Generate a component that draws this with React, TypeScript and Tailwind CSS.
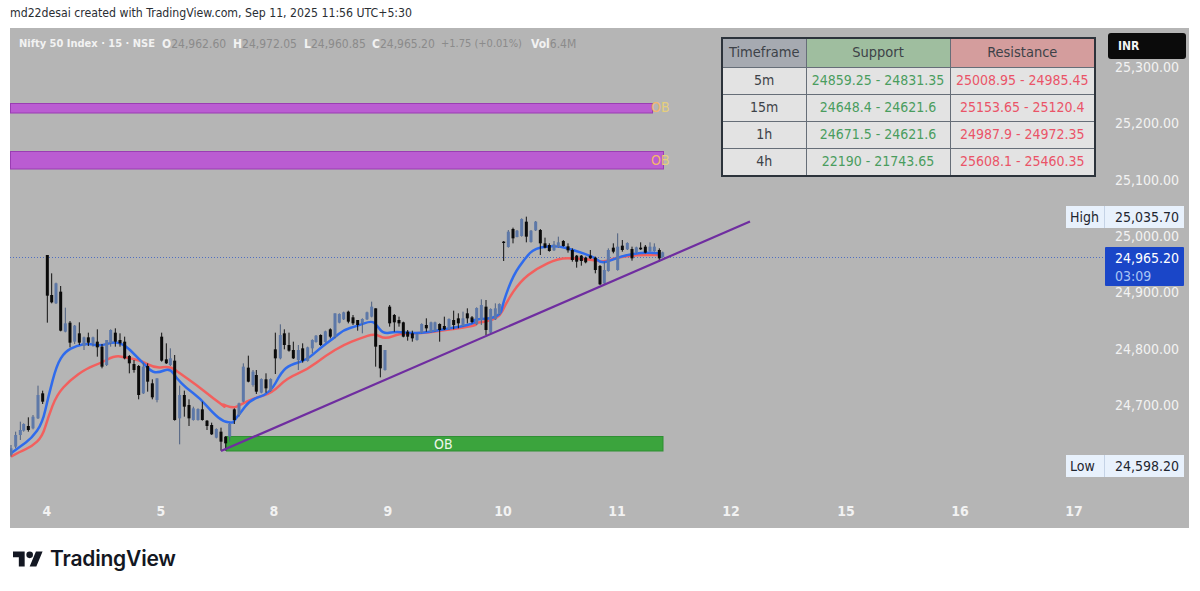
const uiFont = "font-['DejaVu_Sans_Condensed','Noto_Sans',sans-serif]";

type Bar = [number, number, number, number, number, number];

// rows are x, wick top, body top, body bottom, wick bottom, up(1)/down(0)
const toPage = (ox: number, oy: number, rows: Bar[]) =>
  rows.map(
    ([x, hi, top, bot, lo, up]) =>
      [ox + x / 3, oy + hi / 3, oy + top / 3, oy + bot / 3, oy + lo / 3, up] as Bar
  );

const bars: Bar[] = [
  ...toPage(0, 240, [
    [33, 615, 625, 645, 650, 1], [47, 575, 585, 620, 625, 1], [61, 545, 570, 585, 600, 1],
    [71, 550, 552, 572, 575, 1], [85, 532, 558, 570, 575, 0], [99, 525, 530, 565, 568, 1],
    [114, 437, 465, 535, 537, 1], [128, 452, 460, 485, 492, 0], [142, 45, 45, 167, 248, 0],
    [155, 100, 165, 187, 190, 0], [168, 128, 130, 190, 192, 1], [182, 138, 155, 272, 274, 0],
    [196, 203, 250, 275, 277, 1], [210, 243, 248, 308, 322, 0], [224, 255, 257, 305, 312, 1],
    [238, 247, 280, 308, 315, 0], [252, 290, 292, 318, 330, 1], [265, 278, 292, 308, 318, 0],
    [279, 290, 292, 310, 320, 1], [292, 268, 305, 322, 350, 0], [306, 312, 320, 380, 385, 0],
    [320, 300, 300, 375, 378, 1], [332, 268, 270, 310, 320, 1], [346, 265, 278, 305, 320, 0],
    [360, 280, 300, 310, 320, 0], [374, 290, 305, 355, 358, 0], [388, 345, 348, 370, 400, 0],
    [402, 360, 372, 390, 398, 0], [416, 375, 378, 465, 478, 0], [430, 368, 380, 460, 462, 1],
    [443, 370, 378, 425, 455, 0], [457, 418, 430, 472, 478, 0], [471, 415, 415, 480, 487, 1],
    [485, 278, 290, 362, 365, 0], [499, 310, 358, 370, 372, 0], [511, 325, 355, 375, 378, 1],
    [524, 345, 362, 540, 542, 0], [539, 437, 465, 535, 613, 1], [553, 452, 465, 500, 530, 0],
    [567, 478, 495, 535, 558, 0], [580, 500, 505, 540, 542, 1], [594, 505, 507, 540, 542, 1],
    [607, 485, 508, 540, 542, 0], [621, 540, 542, 558, 570, 0], [635, 548, 555, 583, 585, 0],
    [649, 565, 567, 593, 595, 1], [663, 563, 575, 605, 632, 0], [677, 588, 590, 610, 632, 0],
    [689, 550, 552, 590, 605, 1], [703, 505, 508, 540, 552, 0], [717, 488, 490, 525, 530, 1],
  ]),
  ...toPage(220, 290, [
    [70, 220, 230, 335, 337, 1], [85, 197, 233, 275, 277, 0], [99, 240, 245, 285, 290, 1],
    [109, 240, 255, 305, 312, 0], [124, 265, 267, 308, 310, 1], [138, 250, 268, 295, 308, 0],
    [152, 265, 267, 303, 305, 1], [166, 128, 178, 205, 252, 0], [181, 103, 135, 205, 208, 1],
    [193, 118, 130, 165, 178, 0], [207, 128, 165, 182, 185, 0], [220, 155, 180, 205, 207, 0],
    [235, 165, 180, 210, 240, 1], [248, 160, 175, 212, 218, 0], [263, 170, 172, 213, 215, 1],
    [277, 148, 150, 175, 190, 1], [288, 135, 137, 156, 158, 1], [302, 133, 135, 165, 168, 0],
    [316, 122, 124, 156, 158, 1], [331, 115, 118, 140, 145, 0], [345, 70, 70, 140, 145, 1],
    [358, 70, 72, 98, 100, 1], [371, 65, 67, 88, 90, 1], [385, 62, 65, 95, 100, 0],
    [399, 75, 82, 100, 105, 0], [413, 90, 90, 105, 122, 0], [427, 85, 87, 100, 130, 1],
    [441, 65, 67, 88, 90, 1], [455, 35, 50, 80, 82, 1], [467, 55, 55, 170, 230, 0],
    [481, 165, 165, 235, 262, 0], [495, 180, 180, 240, 242, 1], [509, 45, 50, 100, 110, 0],
    [523, 72, 75, 97, 125, 0], [537, 80, 90, 100, 110, 0], [550, 95, 97, 140, 142, 0],
    [563, 120, 125, 140, 152, 0], [577, 122, 130, 145, 155, 0], [591, 130, 132, 150, 152, 1],
    [605, 100, 102, 128, 130, 1], [619, 85, 105, 115, 125, 0], [633, 95, 97, 126, 128, 1],
    [645, 95, 97, 123, 125, 1], [659, 100, 102, 120, 155, 0], [673, 80, 108, 118, 120, 0],
    [687, 85, 87, 118, 120, 1], [701, 62, 90, 105, 118, 0], [715, 70, 85, 100, 115, 0],
    [729, 65, 85, 108, 110, 1], [742, 55, 70, 85, 100, 0], [756, 78, 82, 96, 100, 0],
    [770, 52, 54, 103, 105, 1], [784, 28, 45, 90, 105, 1], [798, 30, 50, 120, 135, 0],
    [812, 55, 57, 128, 130, 1], [826, 40, 55, 88, 90, 1],
  ]),
  ...toPage(470, 205, [
    [88, 295, 297, 328, 330, 1], [101, 108, 110, 114, 168, 0], [115, 75, 80, 126, 128, 1],
    [129, 68, 72, 100, 115, 0], [141, 75, 77, 96, 97, 1], [155, 40, 42, 93, 95, 1],
    [169, 35, 50, 95, 112, 0], [183, 75, 77, 111, 113, 1], [197, 48, 50, 76, 78, 1],
    [211, 72, 75, 115, 150, 0], [225, 98, 115, 128, 130, 0], [238, 115, 120, 138, 140, 0],
    [252, 108, 118, 136, 138, 1], [265, 95, 112, 126, 128, 1], [280, 105, 108, 123, 125, 0],
    [294, 115, 124, 136, 143, 0], [307, 130, 135, 165, 170, 0], [320, 150, 152, 170, 188, 0],
    [334, 150, 152, 168, 182, 0], [347, 155, 158, 172, 175, 0], [361, 135, 152, 160, 162, 0],
    [376, 155, 158, 195, 205, 0], [390, 180, 183, 238, 240, 0], [403, 170, 195, 235, 240, 1],
    [415, 130, 135, 198, 200, 1], [430, 115, 128, 140, 145, 0], [443, 85, 125, 195, 197, 1],
    [457, 105, 122, 135, 140, 0], [472, 112, 114, 133, 135, 1], [486, 125, 132, 160, 167, 0],
    [499, 125, 127, 143, 145, 1], [512, 112, 128, 133, 135, 0], [526, 120, 125, 143, 145, 0],
    [540, 112, 125, 138, 140, 1], [553, 115, 125, 138, 140, 1], [568, 130, 135, 160, 170, 0],
    [578, 140, 142, 156, 158, 1],
  ]),
];

const pts = (ox: number, oy: number, list: number[][]) =>
  list.map(([x, y]) => [ox + x / 3, oy + y / 3]);

// quadratic through the midpoints so the averages read as curves
const smooth = (p: number[][]) => {
  let d = `M${p[0][0]} ${p[0][1]}`;
  for (let i = 1; i < p.length - 1; i++) {
    const mx = (p[i][0] + p[i + 1][0]) / 2;
    const my = (p[i][1] + p[i + 1][1]) / 2;
    d += ` Q${p[i][0]} ${p[i][1]} ${mx} ${my}`;
  }
  const last = p[p.length - 1];
  return `${d} L${last[0]} ${last[1]}`;
};

const blueLine = smooth([
  ...pts(0, 240, [[33, 640], [60, 620], [95, 595], [127, 550], [145, 470], [170, 375], [195, 335], [230, 317], [265, 310], [300, 318], [345, 305], [375, 315], [405, 345], [430, 370], [455, 395], [475, 398], [510, 385], [530, 415], [560, 445], [600, 475], [640, 520], [670, 545], [700, 548]]),
  ...pts(220, 290, [[40, 395], [60, 370], [90, 330], [150, 310], [185, 245], [210, 225], [260, 210], [300, 175], [340, 145], [370, 120], [410, 108], [455, 92], [470, 105], [490, 132], [525, 125], [560, 128], [600, 130], [660, 120], [720, 110], [770, 98]]),
  ...pts(470, 205, [[0, 345], [90, 338], [100, 290], [130, 210], [165, 160], [195, 128], [260, 122], [310, 135], [370, 155], [395, 175], [425, 165], [460, 152], [520, 142], [565, 145]]),
]);

const redLine = smooth([
  ...pts(0, 240, [[33, 650], [60, 635], [95, 620], [127, 590], [145, 530], [170, 465], [210, 420], [260, 385], [300, 370], [345, 347], [375, 352], [420, 360], [465, 385], [510, 378], [540, 400], [590, 435], [640, 475], [680, 505]]),
  ...pts(220, 290, [[0, 340], [40, 355], [60, 345], [100, 325], [155, 310], [200, 265], [260, 240], [320, 195], [370, 165], [420, 145], [465, 130], [495, 148], [540, 130], [600, 130], [680, 120], [780, 105]]),
  ...pts(470, 205, [[0, 355], [85, 345], [110, 290], [150, 230], [200, 190], [265, 160], [320, 160], [375, 165], [400, 172], [440, 158], [500, 150], [565, 150]]),
]);

const prices = [25300, 25200, 25100, 25000, 24900, 24800, 24700];
const days = [
  ["4", 47], ["5", 161], ["8", 274], ["9", 388], ["10", 503],
  ["11", 617], ["12", 731], ["15", 846], ["16", 960], ["17", 1074],
] as const;

const levels = [
  ["5m", "24859.25 - 24831.35", "25008.95 - 24985.45", "h-[27px]"],
  ["15m", "24648.4 - 24621.6", "25153.65 - 25120.4", "h-[27px]"],
  ["1h", "24671.5 - 24621.6", "24987.9 - 24972.35", "h-[27px]"],
  ["4h", "22190 - 21743.65", "25608.1 - 25460.35", "h-[28px]"],
];

function ChartDrawing() {
  return (
    <svg viewBox="10 28 1179 500" className="absolute inset-0 h-full w-full">
      <line x1="10" y1="257.5" x2="1106" y2="257.5" stroke="#4f6fc0" strokeDasharray="1 2" />

      {/* zones */}
      <rect x="10.5" y="103.5" width="642" height="9.5" fill="#ba5cd2" stroke="#9a3db3" />
      <rect x="10.5" y="151.5" width="653" height="17.5" fill="#ba5cd2" stroke="#9a3db3" />
      <rect x="226.5" y="436.5" width="436.5" height="14.5" fill="#3ba43d" stroke="#2f8f33" />

      <path d={redLine} fill="none" stroke="#f2605e" strokeWidth="2.5" strokeLinejoin="round" />
      <path d={blueLine} fill="none" stroke="#2f6bec" strokeWidth="2.5" strokeLinejoin="round" />

      {bars.map(([x, hi, top, bot, lo, up], i) => {
        const color = up ? "#5d78a8" : "#0a0a0a";
        return (
          <g key={i}>
            <line x1={x} y1={hi} x2={x} y2={lo} stroke={up ? "#4c5f80" : "#111111"} strokeWidth="1" />
            <rect x={x - 1.5} y={top} width="3" height={Math.max(bot - top, 1)} fill={color} />
          </g>
        );
      })}

      <line x1="221" y1="451" x2="750" y2="221.5" stroke="#6f2da0" strokeWidth="2.2" />
    </svg>
  );
}

function LevelsTable() {
  return (
    <table className="absolute left-[711px] top-[9px] h-[139px] w-[375px] table-fixed border-collapse border-2 border-[#2c333b] text-[14px] text-[#3d4248]">
      <colgroup>
        <col className="w-[84px]" />
        <col className="w-[144px]" />
        <col />
      </colgroup>
      <thead>
        <tr className="h-[29px] text-[14.5px]">
          <th className="border border-[#666e78] bg-[#a6aab1] font-normal">Timeframe</th>
          <th className="border border-[#666e78] bg-[#9fbe9f] font-normal">Support</th>
          <th className="border border-[#666e78] bg-[#d49d9d] font-normal">Resistance</th>
        </tr>
      </thead>
      <tbody className="bg-[#e3e3e3] text-center">
        {levels.map(([tf, support, resistance, height]) => (
          <tr key={tf} className={height}>
            <td className="border border-[#666e78]">{tf}</td>
            <td className="border border-[#666e78] text-[#4a9d5e]">{support}</td>
            <td className="border border-[#666e78] text-[#ea5468]">{resistance}</td>
          </tr>
        ))}
      </tbody>
    </table>
  );
}

function ExtremeTag({ label, value, top }: { label: string; value: string; top: string }) {
  return (
    <div className={`absolute left-[1056px] flex h-[22px] w-[118px] items-center bg-[#e8f1fc] text-[14px] text-[#1f2630] ${top}`}>
      <span className="w-[39px] border-r border-[#c5d3e6] pl-[4px] leading-[22px]">{label}</span>
      <span className="flex-1 pr-[5px] text-right">{value}</span>
    </div>
  );
}

export default function App() {
  return (
    <div className={`flex h-[591px] w-[1200px] flex-col overflow-hidden bg-white ${uiFont}`}>
      <div className="flex h-[28px] items-center pb-[2px] pl-[10px] text-[12.2px] text-[#2a2e33]">
        md22desai created with TradingView.com, Sep 11, 2025 11:56 UTC+5:30
      </div>

      <div className="relative ml-[10px] h-[500px] w-[1179px] bg-[#b5b5b5]">
        <ChartDrawing />

        {/* legend */}
        <div className="absolute left-[9px] top-[9px] flex whitespace-nowrap text-[12px] leading-[14px] text-[#8b8b8b]">
          <span className="w-[143px] text-[11px] font-bold text-[#f2f2f2]">Nifty 50 Index · 15 · NSE</span>
          <span className="w-[71px]"><b className="text-[#f2f2f2]">O</b>24,962.60</span>
          <span className="w-[71px]"><b className="text-[#f2f2f2]">H</b>24,972.05</span>
          <span className="w-[68px]"><b className="text-[#f2f2f2]">L</b>24,960.85</span>
          <span className="w-[69px]"><b className="text-[#f2f2f2]">C</b>24,965.20</span>
          <span className="w-[90px] text-[11px]">+1.75 (+0.01%)</span>
          <span><b className="text-[#f2f2f2]">Vol</b>6.4M</span>
        </div>

        {/* zone labels */}
        <span className="absolute left-[641px] top-[71px] text-[14px] leading-[16px] text-[#f3b56e]">O<span className="text-[#e6cf7c]">B</span></span>
        <span className="absolute left-[641px] top-[124px] text-[14px] leading-[16px] text-[#f3b56e]">O<span className="text-[#e6cf7c]">B</span></span>
        <span className="absolute left-[424px] top-[408px] text-[14px] leading-[16px] text-[#eef6ea]">OB</span>

        <LevelsTable />

        {/* price scale */}
        {prices.map((p) => (
          <span
            key={p}
            className="absolute right-[10px] text-[14px] leading-[18px] text-[#f2f2f2]"
            style={{ top: 199 + (25000 - p) * 0.5645 }}
          >
            {p.toLocaleString("en-US")}.00
          </span>
        ))}

        <div className="absolute left-[1098px] top-[5px] flex h-[26px] w-[78px] items-center rounded-[3px] bg-[#0b0b0b] pl-[10px] text-[12px] font-bold text-[#f4f4f4]">
          INR
        </div>

        <ExtremeTag label="High" value="25,035.70" top="top-[178px]" />
        <ExtremeTag label="Low" value="24,598.20" top="top-[427px]" />

        <div className="absolute left-[1095px] top-[219px] flex h-[39px] w-[79px] flex-col justify-center rounded-[1px] bg-[#1a46c8] pl-[10px] text-[14px] leading-[18px] text-white">
          <span>24,965.20</span>
          <span className="text-[#a9c4f5]">03:09</span>
        </div>

        {/* time scale */}
        {days.map(([label, x]) => (
          <span
            key={label}
            className="absolute top-[474px] w-[30px] -translate-x-1/2 text-center text-[14px] font-bold leading-[18px] text-[#f2f2f2]"
            style={{ left: x - 10 }}
          >
            {label}
          </span>
        ))}
      </div>

      <div className="flex flex-1 items-center gap-[7px] pb-[1px] pl-[13px]">
        <svg viewBox="0 4 36 18" className="h-[16px] w-[30px]" fill="#131722">
          <path d="M14 22H7V11H0V4h14v18zM28 22h-8l7.5-18h8L28 22z" />
          <circle cx="20" cy="8" r="4" />
        </svg>
        <span className="font-['Inter',sans-serif] text-[21px] font-semibold tracking-[-0.2px] text-[#131722]">
          TradingView
        </span>
      </div>
    </div>
  );
}
